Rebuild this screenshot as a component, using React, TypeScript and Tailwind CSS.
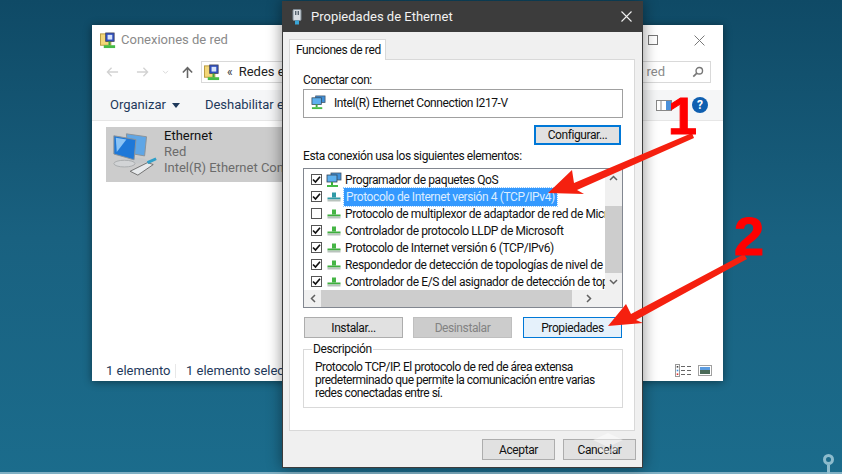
import React from 'react';

const uiFont = { fontFamily: 'Roboto, "Liberation Sans", sans-serif' };

const NetIcon = ({ className = '' }: { className?: string }) => (
  <svg viewBox="0 0 16 16" className={className}>
    <rect x="5" y="1" width="10" height="7" fill="#3f8fd8" stroke="#456" strokeWidth="0.8" />
    <rect x="1" y="3" width="10" height="7" fill="#5db0ee" stroke="#345" strokeWidth="0.8" />
    <rect x="5" y="10" width="2" height="3" fill="#3cab3c" />
    <rect x="1" y="13" width="11" height="2" fill="#46bb46" />
  </svg>
);

const FolderNetIcon = ({ className = '' }: { className?: string }) => (
  <svg viewBox="0 0 18 18" className={className}>
    <rect x="0.5" y="2" width="11" height="12" fill="#f3d778" stroke="#b89a3e" />
    <rect x="6" y="1" width="9" height="9" fill="#2f4fc0" stroke="#445" strokeWidth="0.8" />
    <rect x="8" y="3" width="5" height="5" fill="#d7e3fa" />
    <rect x="9" y="10" width="2" height="4" fill="#3cab3c" />
    <rect x="4" y="14" width="12" height="3" fill="#46bb46" />
  </svg>
);

const ProtoIcon = ({ selected = false }: { selected?: boolean }) => (
  <svg viewBox="0 0 14 10" className="w-[14px] h-[10px] shrink-0">
    <rect x="5" y="0.5" width="4" height="5" fill={selected ? '#2f9aa6' : '#45b545'} />
    <rect x="0.5" y="5.5" width="13" height="2" fill={selected ? '#2f9aa6' : '#3fae3f'} />
    <rect x="0.5" y="7.5" width="13" height="2" fill="#b9c3bd" />
  </svg>
);

const Check = ({ on }: { on: boolean }) => (
  <span className="w-[11px] h-[11px] border border-[#555] bg-white flex items-center justify-center shrink-0">
    {on && (
      <svg viewBox="0 0 9 9" className="w-[9px] h-[9px]">
        <path d="M1 4.5 L3.5 7 L8 1.8" fill="none" stroke="#111" strokeWidth="1.7" />
      </svg>
    )}
  </span>
);

const rows = [
  { label: 'Programador de paquetes QoS', on: true, qos: true },
  { label: 'Protocolo de Internet versión 4 (TCP/IPv4)', on: true, selected: true },
  { label: 'Protocolo de multiplexor de adaptador de red de Microsoft', on: false },
  { label: 'Controlador de protocolo LLDP de Microsoft', on: true },
  { label: 'Protocolo de Internet versión 6 (TCP/IPv6)', on: true },
  { label: 'Respondedor de detección de topologías de nivel de vínculo', on: true },
  { label: 'Controlador de E/S del asignador de detección de topologías', on: true },
];

const ExplorerWindow = () => (
  <div className="absolute left-[92px] top-[25px] w-[631px] h-[356px] bg-white flex flex-col text-[12px] whitespace-nowrap shadow-[0_1px_8px_rgba(0,0,0,0.45)]">
    <div className="h-[29px] flex items-center pl-2 pt-[1px] shrink-0">
      <FolderNetIcon className="w-[17px] h-[17px]" />
      <span className="ml-[4px] text-[#8a8a8a] text-[13px]">Conexiones de red</span>
      <span className="ml-auto w-[10px] h-[10px] border border-[#777] mr-[36px]" />
      <svg viewBox="0 0 10 10" className="w-[11px] h-[11px] mr-[18px]">
        <path d="M0.5 0.5 L9.5 9.5 M9.5 0.5 L0.5 9.5" stroke="#777" strokeWidth="0.9" />
      </svg>
    </div>
    <div className="h-[36px] flex items-center pl-[14px] pr-[12px] shrink-0">
      <svg viewBox="0 0 14 12" className="w-[13px] h-[12px]">
        <path d="M13 6 H2 M6 1.5 L1.5 6 L6 10.5" fill="none" stroke="#d2d2d2" strokeWidth="1.4" />
      </svg>
      <svg viewBox="0 0 14 12" className="w-[13px] h-[12px] ml-[17px]">
        <path d="M1 6 H12 M8 1.5 L12.5 6 L8 10.5" fill="none" stroke="#d2d2d2" strokeWidth="1.4" />
      </svg>
      <svg viewBox="0 0 8 6" className="w-[7px] h-[5px] ml-[13px]">
        <path d="M1 1 L4 4 L7 1" fill="none" stroke="#d2d2d2" strokeWidth="1" />
      </svg>
      <svg viewBox="0 0 14 14" className="w-[13px] h-[13px] ml-[12px]">
        <path d="M7 13 V2 M2 7 L7 1.8 L12 7" fill="none" stroke="#666" strokeWidth="1.7" />
      </svg>
      <div className="ml-[7px] flex-1 min-w-0 h-[22px] border border-[#d9d9d9] flex items-center">
        <FolderNetIcon className="w-[17px] h-[17px] ml-[2px]" />
        <span className="ml-[6px] text-[#333]">«</span>
        <span className="ml-[6px] text-[#222] text-[13px]">Redes e Internet</span>
      </div>
      <div className="ml-[2px] w-[230px] h-[22px] border border-[#d9d9d9] flex items-center justify-end pr-[6px] shrink-0">
        <span className="text-[#8a8a8a] mr-[27px] text-[13px]">Buscar en Conexiones de red</span>
        <svg viewBox="0 0 14 14" className="w-[12px] h-[12px] shrink-0">
          <circle cx="8.5" cy="5.5" r="3.8" fill="none" stroke="#777" strokeWidth="1.6" />
          <path d="M5.7 8.3 L1.5 12.5" stroke="#777" strokeWidth="2" />
        </svg>
      </div>
    </div>
    <div className="h-[31px] bg-[#f5f6f7] border-b border-[#e6e6e6] flex items-center pl-[18px] pr-[15px] shrink-0 text-[13px]">
      <span className="text-[#1e395b]">Organizar</span>
      <svg viewBox="0 0 8 5" className="w-[8px] h-[5px] ml-[6px]">
        <path d="M0 0 H8 L4 5 Z" fill="#1e395b" />
      </svg>
      <span className="ml-[25px] text-[#1e395b]">Deshabilitar este dispositivo de red</span>
      <svg viewBox="0 0 16 11" className="ml-auto w-[16px] h-[11px]">
        <rect x="0.5" y="0.5" width="15" height="10" fill="#fff" stroke="#888" />
        <rect x="10" y="1" width="5" height="9" fill="#4a90d9" />
        <path d="M5 1 V10" stroke="#888" />
      </svg>
      <span className="ml-[20px] w-[16px] h-[16px] rounded-full bg-[#0f5fb0] text-white font-bold text-[12px] leading-[16px] text-center">?</span>
    </div>
    <div className="flex-1 pl-[14px] pt-[6px]">
      <div className="w-[300px] h-[55px] bg-[#cccccc] flex items-start">
        <svg viewBox="0 0 50 50" className="w-[48px] h-[50px] ml-[5px] mt-[2px] shrink-0">
          <path d="M16 4 L37 7 L35 27 L18 24 Z" fill="#5fa6e6" stroke="#8c9298" />
          <ellipse cx="27" cy="32" rx="11" ry="3" fill="#c5c8ca" />
          <path d="M3 6 L26 10 L24 31 L3 25 Z" fill="#1e78d8" stroke="#8c9298" />
          <path d="M5 8 L16 10 L6 23 Z" fill="#8cc4f5" />
          <ellipse cx="14" cy="35" rx="11" ry="3.5" fill="#d2d4d6" stroke="#a8abad" />
          <path d="M20 43 L38 34 L44 36 L28 47 Z" fill="#e7eaec" stroke="#555" strokeWidth="0.8" />
          <path d="M38 34 L47 30" stroke="#2f9fc9" strokeWidth="3" />
        </svg>
        <div className="ml-[5px] pt-[1px] flex flex-col leading-[16px] text-[13px] overflow-hidden">
          <span className="text-[#111]">Ethernet</span>
          <span className="text-[#6b6b6b]">Red</span>
          <span className="text-[#6b6b6b]">Intel(R) Ethernet Connection I217-V</span>
        </div>
      </div>
    </div>
    <div className="h-[24px] flex items-center pl-[14px] pr-[11px] pt-[3px] shrink-0 text-[13px] text-[#1e395b]">
      <span className="w-[69px]">1 elemento</span>
      <span className="w-[1px] h-[14px] bg-[#e8e8e8]" />
      <span className="ml-[10px]">1 elemento seleccionado</span>
      <svg viewBox="0 0 17 13" className="ml-auto w-[17px] h-[13px]">
        <rect x="0.5" y="0.5" width="4" height="12" fill="#fff" stroke="#999" />
        <rect x="1.7" y="2" width="1.6" height="1.6" fill="#444" />
        <rect x="1.7" y="5.7" width="1.6" height="1.6" fill="#3b8fe0" />
        <rect x="1.7" y="9.4" width="1.6" height="1.6" fill="#d33" />
        <path d="M6 2.5 H10 M12 2.5 H16 M6 6.5 H10 M12 6.5 H16 M6 10.5 H10 M12 10.5 H16" stroke="#666" />
      </svg>
      <svg viewBox="0 0 14 11" className="ml-[6px] w-[14px] h-[11px]">
        <rect x="0.5" y="0.5" width="13" height="10" fill="#fff" stroke="#a0a0a0" />
        <rect x="2" y="2" width="10" height="3" fill="#5c9ce0" />
        <rect x="2" y="5" width="10" height="4" fill="#4a6a58" />
      </svg>
    </div>
  </div>
);

const Dialog = () => (
  <div className="absolute left-[282px] top-[1px] w-[361px] h-[467px] bg-[#f0f0f0] border-x border-b border-[#3c3c3c] flex flex-col text-[12px] tracking-[-0.4px] text-[#111] shadow-[0_0_14px_rgba(0,0,0,0.45)]">
    <div className="h-[31px] bg-[#3c3c3c] flex items-center pl-[9px] pr-[9px] shrink-0 text-[#f2f2f2] text-[13px] tracking-normal">
      <svg viewBox="0 0 10 16" className="w-[10px] h-[16px]">
        <rect x="1" y="0.5" width="8" height="11" rx="1" fill="#d8dde2" stroke="#7f8b95" />
        <rect x="3" y="2" width="1.4" height="4" fill="#56636e" />
        <rect x="5.6" y="2" width="1.4" height="4" fill="#56636e" />
        <rect x="3" y="11.5" width="4" height="4" fill="#39a6d8" />
      </svg>
      <span className="ml-[9px]">Propiedades de Ethernet</span>
      <svg viewBox="0 0 11 11" className="ml-auto w-[11px] h-[11px] mr-[1px]">
        <path d="M0.5 0.5 L10.5 10.5 M10.5 0.5 L0.5 10.5" stroke="#f0f0f0" strokeWidth="1.1" />
      </svg>
    </div>
    <div className="pl-[6px] pt-[7px] shrink-0">
      <div className="w-[97px] h-[21px] bg-white border border-b-0 border-[#d9d9d9] relative z-10 flex items-center pl-[6px] mb-[-1px] whitespace-nowrap">
        Funciones de red
      </div>
    </div>
    <div className="mx-[6px] w-[346px] h-[372px] bg-white border border-[#d9d9d9] pl-[13px] pr-[10px] pt-[12px] shrink-0">
      <div className="h-[17px] leading-[17px]">Conectar con:</div>
      <div className="w-[320px] h-[29px] border border-[#a0a0a0] flex items-center pl-[7px] pb-[2px]">
        <NetIcon className="w-[15px] h-[15px]" />
        <span className="ml-[8px]">Intel(R) Ethernet Connection I217-V</span>
      </div>
      <div className="mt-[7px] flex justify-end pr-[3px]">
        <button className="w-[87px] h-[20px] bg-[#e1e1e1] border-2 border-[#0078d7] leading-none">Configurar...</button>
      </div>
      <div className="mt-[3px] h-[17px] leading-[17px]">Esta conexión usa los siguientes elementos:</div>
      <div className="mt-[3px] w-[320px] h-[140px] border border-[#828790] flex flex-col">
        <div className="flex h-[121px]">
          <div className="w-[301px] overflow-hidden pt-[2px]">
            {rows.map((r) => (
              <div key={r.label} className="h-[17px] flex items-center pl-[7px] whitespace-nowrap">
                <Check on={r.on} />
                <span className="w-[23px] flex justify-center shrink-0">
                  {r.qos ? <NetIcon className="w-[16px] h-[16px]" /> : <ProtoIcon selected={r.selected} />}
                </span>
                <span className={r.selected ? 'ml-[-1px] px-[2px] bg-[#3399ff] text-[#dcedff] outline-1 outline-dotted outline-[#8ec6ff]' : ''}>{r.label}</span>
              </div>
            ))}
          </div>
          <div className="w-[17px] bg-[#f0f0f0] flex flex-col">
            <div className="h-[17px] flex items-center justify-center">
              <svg viewBox="0 0 9 6" className="w-[9px] h-[6px]"><path d="M1 5 L4.5 1.5 L8 5" fill="none" stroke="#606060" strokeWidth="1.5" /></svg>
            </div>
            <div className="h-[20px]" />
            <div className="h-[67px] bg-[#cdcdcd]" />
            <div className="h-[17px] flex items-center justify-center">
              <svg viewBox="0 0 9 6" className="w-[9px] h-[6px]"><path d="M1 1 L4.5 4.5 L8 1" fill="none" stroke="#606060" strokeWidth="1.5" /></svg>
            </div>
          </div>
        </div>
        <div className="flex h-[17px] bg-[#f0f0f0] items-center">
          <div className="w-[17px] flex justify-center">
            <svg viewBox="0 0 6 9" className="w-[6px] h-[9px]"><path d="M5 1 L1.5 4.5 L5 8" fill="none" stroke="#606060" strokeWidth="1.5" /></svg>
          </div>
          <div className="w-[251px] h-[17px] bg-[#cdcdcd]" />
          <div className="w-[33px] flex justify-center">
            <svg viewBox="0 0 6 9" className="w-[6px] h-[9px]"><path d="M1 1 L4.5 4.5 L1 8" fill="none" stroke="#606060" strokeWidth="1.5" /></svg>
          </div>
        </div>
      </div>
      <div className="mt-[9px] flex gap-[10px] pl-[1px]">
        <button className="w-[99px] h-[21px] bg-[#e1e1e1] border border-[#adadad]">Instalar...</button>
        <button className="w-[99px] h-[21px] bg-[#cccccc] border border-[#bfbfbf] text-[#838383]">Desinstalar</button>
        <button className="w-[99px] h-[21px] ml-[1px] bg-[#e5f1fb] border border-[#0078d7]">Propiedades</button>
      </div>
      <fieldset className="mt-[4px] w-[320px] h-[66px] border border-[#d9d9d9] pl-[8px] pr-[8px]">
        <legend className="px-[1px] leading-[15px]">Descripción</legend>
        <p className="pl-[3px] pt-[4px] leading-[13px] w-[285px] tracking-[-0.5px]">
          Protocolo TCP/IP. El protocolo de red de área extensa predeterminado que permite la comunicación entre varias redes conectadas entre sí.
        </p>
      </fieldset>
    </div>
    <div className="flex justify-end gap-[8px] pr-[6px] mt-[8px]">
      <button className="w-[73px] h-[21px] bg-[#e1e1e1] border border-[#adadad]">Aceptar</button>
      <button className="w-[73px] h-[21px] bg-[#e1e1e1] border border-[#adadad]">Cancelar</button>
    </div>
  </div>
);

const Annotations = () => (
  <>
    <svg viewBox="0 0 842 474" className="absolute inset-0 w-[842px] h-[474px] pointer-events-none">
      <path d="M548 193 L572 170 L574 183 L692 133 L694 138 L577 190 L584 194 Z" fill="#f5200f" />
      <path d="M608 326 L626 304 L631 314 L744 254 L747 259 L636 320 L643 323 Z" fill="#f5200f" />
      {/* watermark over the Cancelar button */}
      <path d="M593 440 L608 433 L623 440 L608 447 Z M599 446 L608 450 L617 446 L617 451 L608 454 L599 451 Z" fill="#ffffff" opacity="0.45" />
    </svg>
    <span className="absolute left-[668px] top-[89px] text-[52px] leading-[54px] font-bold text-[#ff0000] [-webkit-text-stroke:1px_#ff0000] [font-family:'Liberation_Sans',sans-serif]">1</span>
    <span className="absolute left-[734px] top-[209px] text-[54px] leading-[54px] font-bold text-[#ff0000] [-webkit-text-stroke:1px_#ff0000] [font-family:'Liberation_Sans',sans-serif]">2</span>
  </>
);

export default function App() {
  return (
    <div className="relative w-[842px] h-[474px] overflow-hidden bg-gradient-to-b from-[#0f4a66] via-[#196180] to-[#1b6c8c]" style={uiFont}>
      {/* desktop wallpaper line and pin */}
      <div className="absolute left-0 right-0 bottom-0 h-[2px] bg-[#7fb0c4]" />
      <div className="absolute left-[823px] top-[454px] w-[11px] h-[11px] rounded-full border-[3px] border-[#8dbccd]" />
      <div className="absolute left-[827px] top-[465px] w-[3px] h-[9px] bg-[#8dbccd]" />

      <ExplorerWindow />
      <Dialog />
      <Annotations />
    </div>
  );
}
